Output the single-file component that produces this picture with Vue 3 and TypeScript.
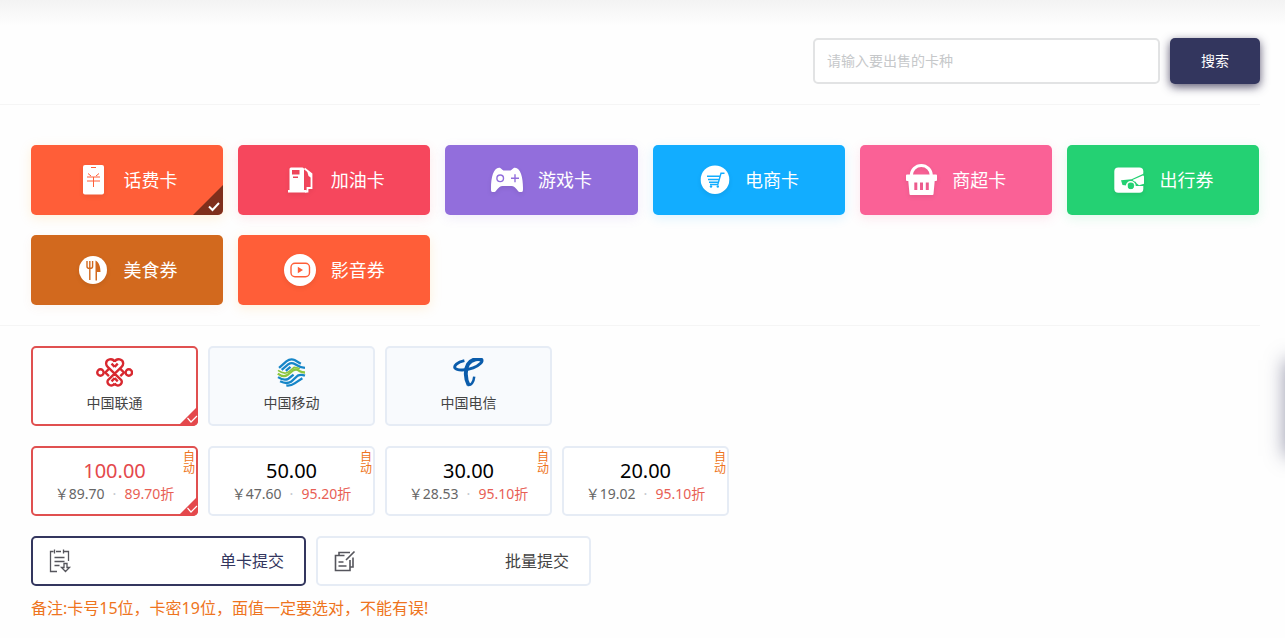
<script setup lang="ts">
import { ref } from 'vue'

interface Category {
  id: string
  name: string
}
interface Carrier {
  id: string
  name: string
}
interface Amount {
  value: string
  price: string
  rate: string
}

const categories: Category[] = [
  { id: 'phone', name: '话费卡' },
  { id: 'fuel', name: '加油卡' },
  { id: 'game', name: '游戏卡' },
  { id: 'shop', name: '电商卡' },
  { id: 'market', name: '商超卡' },
  { id: 'travel', name: '出行券' },
  { id: 'food', name: '美食券' },
  { id: 'video', name: '影音券' },
]
const carriers: Carrier[] = [
  { id: 'unicom', name: '中国联通' },
  { id: 'mobile', name: '中国移动' },
  { id: 'telecom', name: '中国电信' },
]
const amounts: Amount[] = [
  { value: '100.00', price: '89.70', rate: '89.70' },
  { value: '50.00', price: '47.60', rate: '95.20' },
  { value: '30.00', price: '28.53', rate: '95.10' },
  { value: '20.00', price: '19.02', rate: '95.10' },
]
const modes = [
  { id: 'single', name: '单卡提交' },
  { id: 'batch', name: '批量提交' },
]

const keyword = ref('')
const category = ref('phone')
const carrier = ref('unicom')
const amount = ref('100.00')
const mode = ref('single')
</script>

<template>
  <main class="page">
    <form class="search" role="search" @submit.prevent>
      <input v-model="keyword" class="search-input" type="text" aria-label="卡种" placeholder="请输入要出售的卡种" />
      <button class="search-button" type="submit">搜索</button>
    </form>

    <section class="categories">
      <button
        v-for="c in categories"
        :key="c.id"
        type="button"
        class="category"
        :class="c.id"
        :aria-pressed="category === c.id"
        @click="category = c.id"
      >
        <svg class="category-icon" viewBox="0 0 32 32" aria-hidden="true">
          <g v-if="c.id === 'phone'">
            <rect x="6" y="1" width="21" height="29.5" rx="2" fill="#fff" />
            <path d="M14 3.500h5" class="cut thin" />
            <path d="M11 9.500l3 2.500M22 9.500l-3 2.500M10 13h13M10 17h13M16.500 13v10" class="cut thin" />
          </g>
          <g v-else-if="c.id === 'fuel'">
            <path
              fill="#fff"
              fill-rule="evenodd"
              d="M7 3.500h11.500a1.500 1.500 0 0 1 1.500 1.500v21h2.500v2.500H4V26h1.500V5A1.500 1.500 0 0 1 7 3.500zM8 6v4.500h7.500V6zM9 12.500V14h5v-1.500z"
            />
            <path d="M20.500 4.500l7 5.500v14h-4v3.500h-2.500" fill="none" stroke="#fff" stroke-width="1.800" />
            <path d="M23 6.500l4.500 3.500v4l-3-2z" fill="#fff" />
          </g>
          <g v-else-if="c.id === 'game'">
            <path
              fill="#fff"
              d="M8 3.700c2.500 0 3.300 2.800 5 2.800h6c1.700 0 2.500-2.800 5-2.800 5.500 0 8 10 8 20.300 0 2.500 0 4-1.500 4h-2c-2 0-3.500-6-8-6h-9c-4.500 0-6 6-8 6h-2C0 28 0 26.500 0 24 0 13.700 2.500 3.700 8 3.700z"
            />
            <circle cx="9.200" cy="14.300" r="3.300" class="cut" />
            <path d="M20 14.300h8M24 10.300v8" class="cut" />
          </g>
          <g v-else-if="c.id === 'shop'">
            <circle cx="17" cy="15.700" r="14.300" fill="#fff" />
            <path d="M26.500 9.300H23l-3.200 11.200H12M9 12.300h12.500M10 15.500h10.500M11 18.300h9" class="cut" />
            <circle cx="13" cy="22.500" r="1.200" class="cut-fill" />
            <circle cx="19.800" cy="22.500" r="1.200" class="cut-fill" />
          </g>
          <g v-else-if="c.id === 'market'">
            <path d="M6.300 11.500a9.900 9.900 0 0 1 20 0" fill="none" stroke="#fff" stroke-width="3" />
            <path
              fill="#fff"
              fill-rule="evenodd"
              d="M2 10.500h29a1 1 0 0 1 1 1V16a1 1 0 0 1-1 1h-1.300L28.500 30a1 1 0 0 1-1 1H5.500a1 1 0 0 1-1-1L3.300 17H2a1 1 0 0 1-1-1v-4.500a1 1 0 0 1 1-1zM9.300 18.500v7.500h3v-7.500zM15 18.500v7.500h3v-7.500zM20.800 18.500v7.500h3v-7.500z"
            />
          </g>
          <g v-else-if="c.id === 'travel'">
            <rect x="2.300" y="3.500" width="29" height="25.300" rx="4" fill="#fff" />
            <path d="M32 9.500v1.500l-11.500 5 2 1.500H32v4.500h-9.500a4.500 4.500 0 0 0-8-.500l-4-.500L9 16.300l10.500-1z" class="cut-fill" />
            <path d="M23 16.800l9-5v8l-5 1.500-2.500-2z" fill="#fff" />
            <circle cx="18.800" cy="22" r="3.200" class="cut-fill" />
            <circle cx="18.800" cy="22" r="4.200" fill="none" stroke="#fff" stroke-width="1.500" />
          </g>
          <g v-else-if="c.id === 'food'">
            <circle cx="16" cy="16" r="14" fill="#fff" />
            <path d="M10 7v5.500q0 2 2.800 2t2.800-2V7M12.800 7v19" class="cut" />
            <path d="M18.500 6.500c3.500 1.500 5 6.500 5 11.500H20v8.500h-1.500z" class="cut-fill" />
          </g>
          <g v-else>
            <circle cx="16" cy="16" r="16" fill="#fff" />
            <rect x="7" y="9.200" width="18.500" height="13.500" rx="4" class="cut" />
            <path d="M13.800 12.700l5.200 3.300-5.200 3.300z" class="cut-fill" />
          </g>
        </svg>
        <span>{{ c.name }}</span>
        <svg v-if="category === c.id" class="category-tick" viewBox="0 0 30 30" aria-hidden="true">
          <path d="M30 0v30H0z" fill="#000" fill-opacity=".5" />
          <path d="M16 21.500l3.500 3.500 6.500-7" fill="none" stroke="#fff" stroke-width="2" />
        </svg>
      </button>
    </section>

    <section class="options">
      <div class="row">
        <button
          v-for="c in carriers"
          :key="c.id"
          type="button"
          class="card carrier"
          :aria-pressed="carrier === c.id"
          @click="carrier = c.id"
        >
          <svg v-if="c.id === 'unicom'" class="logo" viewBox="0 0 36 28" aria-hidden="true">
            <g fill="none" stroke="#d8282f" stroke-width="2.300">
              <circle cx="4.300" cy="14" r="3.100" />
              <circle cx="31.700" cy="14" r="3.100" />
              <path
                d="M18 8.500l-3-3M18 8.500l3-3M18 19.500l-3 3M18 19.500l3 3M18 3.500C16-.300 9.500 1 9.800 5.500c0 1.500.700 2.300 1.700 3.300l10.700 10.400 2.300 2.300c2 3.500-4 7.500-6.500 3M18 3.500c2-3.800 8.500-2.500 8.200 2 0 1.500-.700 2.300-1.700 3.300L13.800 19.200l-2.300 2.300c-2 3.500 4 7.500 6.500 3"
              />
              <path d="M12.500 17.500L9 14l3.500-3.500M23.500 17.500L27 14l-3.500-3.500" />
            </g>
          </svg>
          <svg v-else-if="c.id === 'mobile'" class="logo" viewBox="0 0 28 28" aria-hidden="true">
            <g fill="none" stroke-width="2.200">
              <g stroke="#1686c8">
                <path d="M2 9.500L9 3.200Q13 .300 17 2l6 3.500" />
                <path d="M4.500 11.500L11 6Q14 4 17.500 6 22 9 27 9.500" />
                <path d="M8.500 12.500l4.500-4" />
                <path d="M1 18.500q6 4 10 1.500l5-4" />
                <path d="M3 22.500q6 3 10.500.500L20 17q3-1.500 7 0" />
                <path d="M9 26.500q4.500.500 8-2l7.500-5" />
              </g>
              <g stroke="#8dc63f">
                <path d="M.800 15Q6 19 10 16.500l5.500-4.500q3.500-2 6 .500 2.500 1.500 5.500 1.500" />
                <path d="M1 12q4 3 7.500 2.500 2.500-.500 8-5.500 3 0 5.500 1.500" stroke-width="1.600" />
              </g>
            </g>
          </svg>
          <svg v-else class="logo" viewBox="0 0 30 28" aria-hidden="true">
            <g fill="none" stroke="#0b5cab">
              <path d="M11 2.500C4 4 .500 7.500 2 9.800c2 2.500 11 2.200 17.500-.300C26 7 29.500 3 27.500 1.500" stroke-width="2.800" />
              <path d="M28 2.500C26 0 18 .500 14.500 6c-3 5-2.800 14 .500 20" stroke-width="3.800" />
              <path d="M14 26c3.500 1 6-2.500 6.500-8" stroke-width="2.400" />
            </g>
          </svg>
          <span>{{ c.name }}</span>
          <svg v-if="carrier === c.id" class="card-tick" viewBox="0 0 20 20" aria-hidden="true">
            <path d="M20 0v20H0z" fill="#e4484c" />
            <path d="M9.500 12l3.500 4 6-6" fill="none" stroke="#fff" stroke-width="1.200" />
          </svg>
        </button>
      </div>

      <div class="row">
        <button
          v-for="a in amounts"
          :key="a.value"
          type="button"
          class="card amount"
          :aria-pressed="amount === a.value"
          @click="amount = a.value"
        >
          <strong class="amount-value">{{ a.value }}</strong>
          <span class="amount-info">
            <span>￥{{ a.price }}</span>
            <span class="dot">·</span>
            <span class="rate">{{ a.rate }}折</span>
          </span>
          <span class="auto">自动</span>
          <svg v-if="amount === a.value" class="card-tick" viewBox="0 0 20 20" aria-hidden="true">
            <path d="M20 0v20H0z" fill="#e4484c" />
            <path d="M9.500 12l3.500 4 6-6" fill="none" stroke="#fff" stroke-width="1.200" />
          </svg>
        </button>
      </div>

      <div class="row">
        <button
          v-for="m in modes"
          :key="m.id"
          type="button"
          class="mode"
          :aria-pressed="mode === m.id"
          @click="mode = m.id"
        >
          <svg class="mode-icon" viewBox="0 0 24 24" fill="none" stroke="#55555c" aria-hidden="true">
            <g v-if="m.id === 'single'" stroke-width="1.300">
              <path d="M9 22.500H2.500V2.500h3M8 2.500h5M16 2.500h4.500V12M6.500.500v4M15.500.500v4M6.500 8.500h10M6.500 12.500h10M6.500 16.500h5" />
              <path d="M16 14.500h3v4h2.500l-4 4-4-4H16z" />
            </g>
            <g v-else stroke-width="1.600">
              <path d="M6 6.500V3.500h11M11.500 6.500H2.500v15H17V11M20 8.500V18h-2.500" />
              <path d="M21.500 2.500L13 11M5.500 13h5M5.500 17h8" />
            </g>
          </svg>
          <span>{{ m.name }}</span>
        </button>
      </div>

      <p class="note">备注:卡号15位，卡密19位，面值一定要选对，不能有误!</p>
    </section>

    <aside class="side-panel" aria-hidden="true"></aside>
  </main>
</template>

<style>
body {
  margin: 0;
  background: #fff;
}
</style>

<style scoped>
.page {
  position: relative;
  box-sizing: border-box;
  min-height: 100vh;
  padding-right: 25px;
  overflow: hidden;
  background: linear-gradient(#f3f3f3, #fefefe 26px);
  font-family: 'Noto Sans', 'Noto Sans CJK SC', sans-serif;
  font-size: 14px;
  color: #444;
}
button,
input {
  box-sizing: border-box;
  margin: 0;
  font: inherit;
}
button {
  padding: 0;
  border: 0;
  cursor: pointer;
}
.search {
  display: flex;
  justify-content: flex-end;
  gap: 10px;
  padding: 38px 0 20px;
  border-bottom: 1px solid #f5f5f5;
}
.search-input {
  width: 347px;
  height: 46px;
  padding: 0 12px 2px;
  border: 2px solid #e2e3e4;
  border-radius: 5px;
  background: #fff;
  outline: none;
}
.search-input::placeholder {
  color: #c6c8ca;
  opacity: 1;
}
.search-button {
  width: 90px;
  height: 46px;
  padding-bottom: 2px;
  border-radius: 5px;
  background: #33365e;
  box-shadow: 0 3px 10px rgba(40, 35, 70, 0.75);
  color: #fff;
}
.categories {
  display: grid;
  grid-template-columns: repeat(6, 1fr);
  gap: 20px 15px;
  padding: 40px 1px 20px 31px;
  border-bottom: 1px solid #f5f5f5;
}
.category {
  position: relative;
  display: flex;
  align-items: center;
  justify-content: center;
  gap: 15px;
  height: 70px;
  border-radius: 5px;
  background: var(--tone);
  box-shadow: 0 3px 12px var(--glow);
  color: #fff;
  font-size: 18px;
  line-height: 26px;
}
.category-icon {
  width: 32px;
  height: 32px;
  filter: drop-shadow(0 2px 2px rgba(0, 0, 0, 0.08));
}
.cut {
  fill: none;
  stroke: var(--tone);
  stroke-width: 1.4;
}
.thin {
  stroke-width: 1;
}
.cut-fill {
  fill: var(--tone);
}
.category-tick {
  position: absolute;
  right: 0;
  bottom: 0;
  width: 30px;
  height: 30px;
  border-bottom-right-radius: 5px;
}
.phone,
.video {
  --tone: #ff5e38;
  --glow: rgba(255, 190, 90, 0.22);
}
.fuel {
  --tone: #f6475d;
  --glow: rgba(246, 71, 93, 0.12);
}
.game {
  --tone: #926edc;
  --glow: rgba(146, 110, 220, 0.12);
}
.shop {
  --tone: #12adff;
  --glow: rgba(18, 173, 255, 0.14);
}
.market {
  --tone: #fa6196;
  --glow: rgba(250, 97, 150, 0.16);
}
.travel {
  --tone: #24d173;
  --glow: rgba(36, 209, 115, 0.14);
}
.food {
  --tone: #d2691e;
  --glow: rgba(210, 105, 30, 0.06);
}
.options {
  display: flex;
  flex-direction: column;
  gap: 20px;
  padding: 20px 0 16px 31px;
}
.row {
  display: flex;
  gap: 10px;
}
.card {
  position: relative;
  display: flex;
  flex-direction: column;
  align-items: center;
  width: 167px;
  border: 2px solid #e6ecf5;
  border-radius: 5px;
  background: #fff;
  color: #444;
}
.card[aria-pressed='true'] {
  border-color: #e05050;
}
.carrier {
  height: 80px;
  padding-top: 10px;
  gap: 6px;
  background: #f8fafd;
  line-height: 20px;
}
.carrier[aria-pressed='true'] {
  background: #fff;
}
.logo {
  height: 29px;
}
.card-tick {
  position: absolute;
  right: -2px;
  bottom: -2px;
  width: 20px;
  height: 20px;
  border-bottom-right-radius: 5px;
}
.amount {
  height: 70px;
  padding-top: 11px;
}
.amount-value {
  color: #000;
  font-size: 20px;
  font-weight: 400;
  line-height: 24px;
}
.amount[aria-pressed='true'] .amount-value {
  color: #e4484c;
}
.amount-info {
  display: flex;
  line-height: 22px;
  color: #666;
}
.dot {
  width: 20px;
  text-align: center;
  color: #c4c7ce;
}
.rate {
  color: #e85f55;
}
.auto {
  position: absolute;
  top: 3px;
  right: 1px;
  width: 12px;
  font-size: 12px;
  line-height: 12px;
  color: #ee7420;
}
.mode {
  display: flex;
  align-items: center;
  justify-content: space-between;
  width: 275px;
  height: 50px;
  padding: 0 20px 0 15px;
  border: 2px solid #e6ecf5;
  border-radius: 5px;
  background: #fff;
  color: #444;
  font-size: 16px;
  line-height: 24px;
}
.mode[aria-pressed='true'] {
  border-color: #33365e;
  color: #33365e;
}
.mode-icon {
  width: 24px;
  height: 24px;
}
.note {
  margin: -10px 0 0;
  font-size: 16px;
  line-height: 24px;
  color: #ee7420;
}
.side-panel {
  position: absolute;
  top: 360px;
  left: 100%;
  width: 60px;
  height: 96px;
  box-shadow: 0 0 18px rgba(51, 54, 94, 0.5);
}
</style>
